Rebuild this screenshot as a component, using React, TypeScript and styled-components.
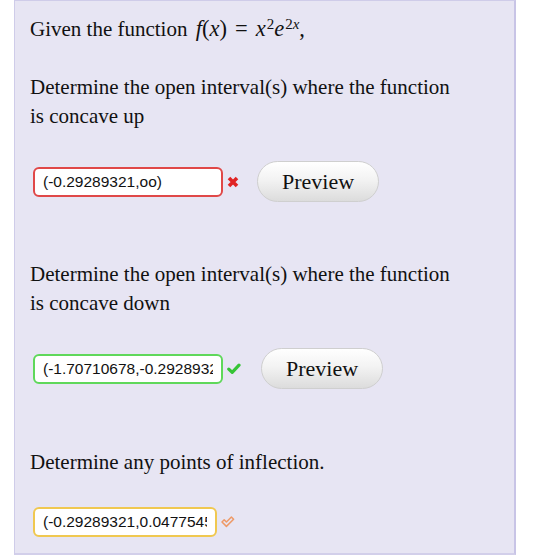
import styled, { createGlobalStyle } from 'styled-components';

type Status = 'wrong' | 'correct' | 'partial';

const statusColor: Record<Status, string> = {
  wrong: '#e04848',
  correct: '#5fd85a',
  partial: '#f0c850',
};

const GlobalStyle = createGlobalStyle`
  html, body {
    margin: 0;
    padding: 0;
    background: #ffffff;
  }
  body {
    font-family: 'Liberation Serif', 'Times New Roman', serif;
    color: #111111;
  }
`;

const Panel = styled.div`
  box-sizing: border-box;
  width: 502px;
  margin-left: 14px;
  padding: 13px 46px 16px 15px;
  background-color: #e7e5f3;
  border: 1px solid #cfcce9;
  border-right: 2px solid #c8c4e6;
  border-bottom: 2px solid #d2cfea;
`;

const Text = styled.p<{ $gap: number }>`
  margin: ${(p) => p.$gap}px 0 0 0;
  font-size: 21px;
  line-height: 29px;
`;

const Math = styled.span`
  font-family: 'Liberation Serif', 'DejaVu Serif', serif;
  font-size: 22.5px;
  margin-left: 3px;
  i {
    font-style: italic;
  }
  sup {
    font-size: 15px;
    line-height: 0;
    vertical-align: 0.5em;
    margin-left: 1px;
  }
  .eq {
    margin: 0 8px;
  }
`;

const AnswerRow = styled.div`
  display: flex;
  align-items: center;
  margin-top: 30px;
  padding-left: 3px;
`;

const AnswerInput = styled.input<{ $status: Status; $width: number }>`
  box-sizing: border-box;
  width: ${(p) => p.$width}px;
  height: 30px;
  padding: 0 8px;
  font-family: 'Liberation Sans', Arial, sans-serif;
  font-size: 15.5px;
  color: #111;
  background: #ffffff;
  border: 2px solid ${(p) => statusColor[p.$status]};
  border-radius: 6px;
  outline: none;
`;

const Mark = styled.span`
  display: inline-flex;
  align-items: center;
  width: 14px;
  margin-left: 4px;
`;

const PreviewButton = styled.button<{ $offset: number }>`
  box-sizing: border-box;
  width: 122px;
  height: 41px;
  margin-left: ${(p) => p.$offset}px;
  border: 1px solid #cfcfcf;
  border-radius: 21px;
  background: linear-gradient(to bottom, #ffffff 0%, #f3f3f3 45%, #dcdcdc 100%);
  font-family: 'Liberation Serif', 'Times New Roman', serif;
  font-size: 22px;
  color: #111;
  cursor: pointer;
`;

const WrongIcon = () => (
  <svg width="12" height="12" viewBox="0 0 12 12">
    <path d="M2 2 L10 10 M10 2 L2 10" stroke="#e02424" strokeWidth="3.6" />
  </svg>
);

const CorrectIcon = () => (
  <svg width="14" height="12" viewBox="0 0 14 12">
    <path
      d="M1.8 6.2 L5.2 9.4 L12 2.2"
      stroke="#36c436"
      strokeWidth="3.2"
      fill="none"
      strokeLinecap="round"
      strokeLinejoin="round"
    />
  </svg>
);

const PartialIcon = () => (
  <svg width="14" height="12" viewBox="0 0 14 12">
    <path
      d="M1 6 L3.2 3.8 L5.4 6 L10.4 1 L12.6 3.2 L5.4 10.4 Z"
      stroke="#ee9a68"
      strokeWidth="1.5"
      fill="none"
      strokeLinejoin="round"
    />
  </svg>
);

const App = () => {
  return (
    <>
      <GlobalStyle />
      <Panel>
        <Text $gap={0}>
          Given the function{' '}
          <Math>
            <i>f</i>(<i>x</i>)<span className="eq">=</span>
            <i>x</i>
            <sup>2</sup>
            <i>e</i>
            <sup>
              2<i>x</i>
            </sup>
            ,
          </Math>
        </Text>

        <Text $gap={29}>
          Determine the open interval(s) where the function is concave up
        </Text>
        <AnswerRow>
          <AnswerInput $status="wrong" $width={190} defaultValue="(-0.29289321,oo)" />
          <Mark>
            <WrongIcon />
          </Mark>
          <PreviewButton $offset={16}>Preview</PreviewButton>
        </AnswerRow>

        <Text $gap={58}>
          Determine the open interval(s) where the function is concave down
        </Text>
        <AnswerRow>
          <AnswerInput
            $status="correct"
            $width={190}
            defaultValue="(-1.70710678,-0.29289321)"
          />
          <Mark>
            <CorrectIcon />
          </Mark>
          <PreviewButton $offset={20}>Preview</PreviewButton>
        </AnswerRow>

        <Text $gap={59}>Determine any points of inflection.</Text>
        <AnswerRow>
          <AnswerInput
            $status="partial"
            $width={184}
            defaultValue="(-0.29289321,0.04775455)"
          />
          <Mark>
            <PartialIcon />
          </Mark>
        </AnswerRow>
      </Panel>
    </>
  );
};

export default App;
